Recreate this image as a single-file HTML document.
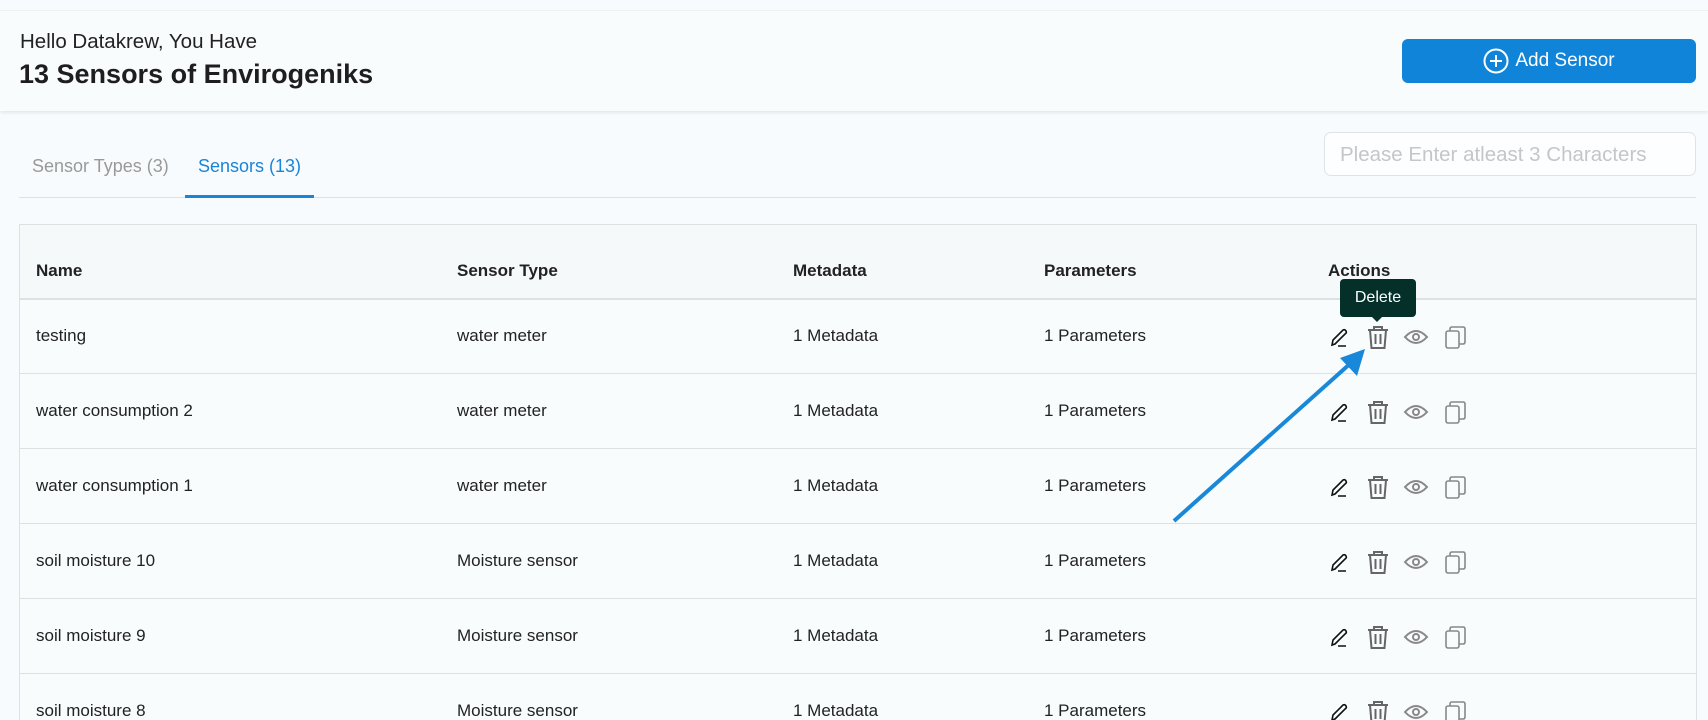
<!DOCTYPE html>
<html><head><meta charset="utf-8"><style>
*{box-sizing:border-box;margin:0;padding:0}
html,body{width:1708px;height:720px;overflow:hidden}
body{background:#f8fbfd;font-family:"Liberation Sans",sans-serif;color:#222;position:relative}
#wrap{position:absolute;left:0;top:0;width:1708px;height:720px;overflow:hidden}
.hdr{position:absolute;left:0;top:10px;width:1708px;height:101px;background:#f9fcfd;border-top:1px solid #eef2f4;box-shadow:0 2px 3px rgba(0,0,0,.08)}
.a{position:absolute;white-space:nowrap}
.btn{position:absolute;left:1402px;top:39px;width:294px;height:44px;background:#0f84d9;border-radius:6px;color:#fff;font-size:19px;display:flex;align-items:center;justify-content:center;gap:6px}
.search{position:absolute;left:1324px;top:132px;width:372px;height:44px;border:1px solid #dfe3e6;border-radius:7px;background:#fcfeff;color:#c3c7ca;font-size:20.5px;padding:10px 15px}
.tbl{position:absolute;left:19px;top:224px;width:1678px;height:520px;border:1px solid #dde1e4;background:#f9fcfd}
.th{position:absolute;top:0;left:0;width:100%;height:75px;background:#f6f9fa;border-bottom:2px solid #dde1e4}
.c{position:absolute;font-size:17px;color:#222;white-space:nowrap}
.h{font-weight:bold;font-size:17px}
</style></head><body><div id="wrap">
<div class="hdr"></div>
<div class="a" style="left:20px;top:30px;font-size:20.5px;color:#222">Hello Datakrew, You Have</div>
<div class="a" style="left:19px;top:59px;font-size:27px;font-weight:bold;color:#1e1e1e">13 Sensors of Envirogeniks</div>
<div class="btn"><svg width="26" height="26" viewBox="0 0 26 26"><circle cx="13" cy="13" r="11.5" fill="none" stroke="#fff" stroke-width="2"/><path d="M13 7v12M7 13h12" stroke="#fff" stroke-width="2"/></svg>Add Sensor</div>
<div class="search">Please Enter atleast 3 Characters</div>
<div class="a" style="left:32px;top:156px;font-size:18px;color:#999">Sensor Types (3)</div>
<div class="a" style="left:198px;top:156px;font-size:18px;color:#1a84d6">Sensors (13)</div>
<div class="a" style="left:19px;top:197px;width:1677px;height:1px;background:#dde1e4"></div>
<div class="a" style="left:185px;top:195px;width:129px;height:3px;background:#1a84d6"></div>
<div class="tbl">
<div class="th">
<div class="c h" style="left:16px;top:36px">Name</div>
<div class="c h" style="left:437px;top:36px">Sensor Type</div>
<div class="c h" style="left:773px;top:36px">Metadata</div>
<div class="c h" style="left:1024px;top:36px">Parameters</div>
<div class="c h" style="left:1308px;top:36px">Actions</div>
</div>
</div>
<div id="rows"></div>
<svg class="a" style="left:0;top:0" width="1708" height="720">
<defs>
<g id="ic">
<path d="M2 17 L3 12 L13 2 Q15 1 16 3 Q17 5 15 6 L5 16 Z M8 18 H16" fill="none" stroke="#111" stroke-width="1.6" transform="translate(10,-9)"/>
<g transform="translate(47,-11)" fill="none" stroke="#666" stroke-width="2"><path d="M1 4h20M7 4V1h8v3M3 4l1.5 18h13L19 4M8.5 8v10M13.5 8v10"/></g>
<g transform="translate(84,-8)" fill="none" stroke="#888" stroke-width="2"><path d="M1 8 Q12 -4 23 8 Q12 20 1 8Z"/><circle cx="12" cy="8" r="3"/></g>
<g transform="translate(125,-11)" fill="none" stroke="#888" stroke-width="1.6"><rect x="1" y="5" width="13" height="17" rx="2"/><path d="M5 5V3q0-2 2-2h11q2 0 2 2v13q0 2-2 2h-4"/></g>
</g>
</defs>
<g id="rowsvg"></g>
</svg>
<script>
var d=[["testing","water meter"],["water consumption 2","water meter"],["water consumption 1","water meter"],["soil moisture 10","Moisture sensor"],["soil moisture 9","Moisture sensor"],["soil moisture 8","Moisture sensor"]];
var h="",s="";
d.forEach(function(r,i){var t=299+i*75;var cy=t+38;
h+='<div class="a" style="left:20px;top:'+t+'px;width:1676px;height:75px;border-bottom:1px solid #dde1e4"></div>';
h+='<div class="c" style="left:36px;top:'+(cy-11)+'px">'+r[0]+'</div><div class="c" style="left:457px;top:'+(cy-11)+'px">'+r[1]+'</div><div class="c" style="left:793px;top:'+(cy-11)+'px">1 Metadata</div><div class="c" style="left:1044px;top:'+(cy-11)+'px">1 Parameters</div>';
s+='<use href="#ic" transform="translate(1320,'+cy+')"/>';});
document.getElementById('rows').innerHTML=h;
document.getElementById('rowsvg').innerHTML=s;
</script>
<svg class="a" style="left:0;top:0" width="1708" height="720">
<line x1="1174" y1="521" x2="1352" y2="362" stroke="#1a88d8" stroke-width="4"/>
<path d="M1365 349 L1340 358 L1357 376 Z" fill="#1a88d8"/>
</svg>
<div class="a" style="left:1340px;top:279px;width:76px;height:38px;background:#05302a;border-radius:4px;color:#fff;font-size:16px;text-align:center;line-height:38px">Delete</div>
<div class="a" style="left:1372px;top:317px;width:0;height:0;border-left:5px solid transparent;border-right:5px solid transparent;border-top:5px solid #05302a"></div>
</div></body></html>
